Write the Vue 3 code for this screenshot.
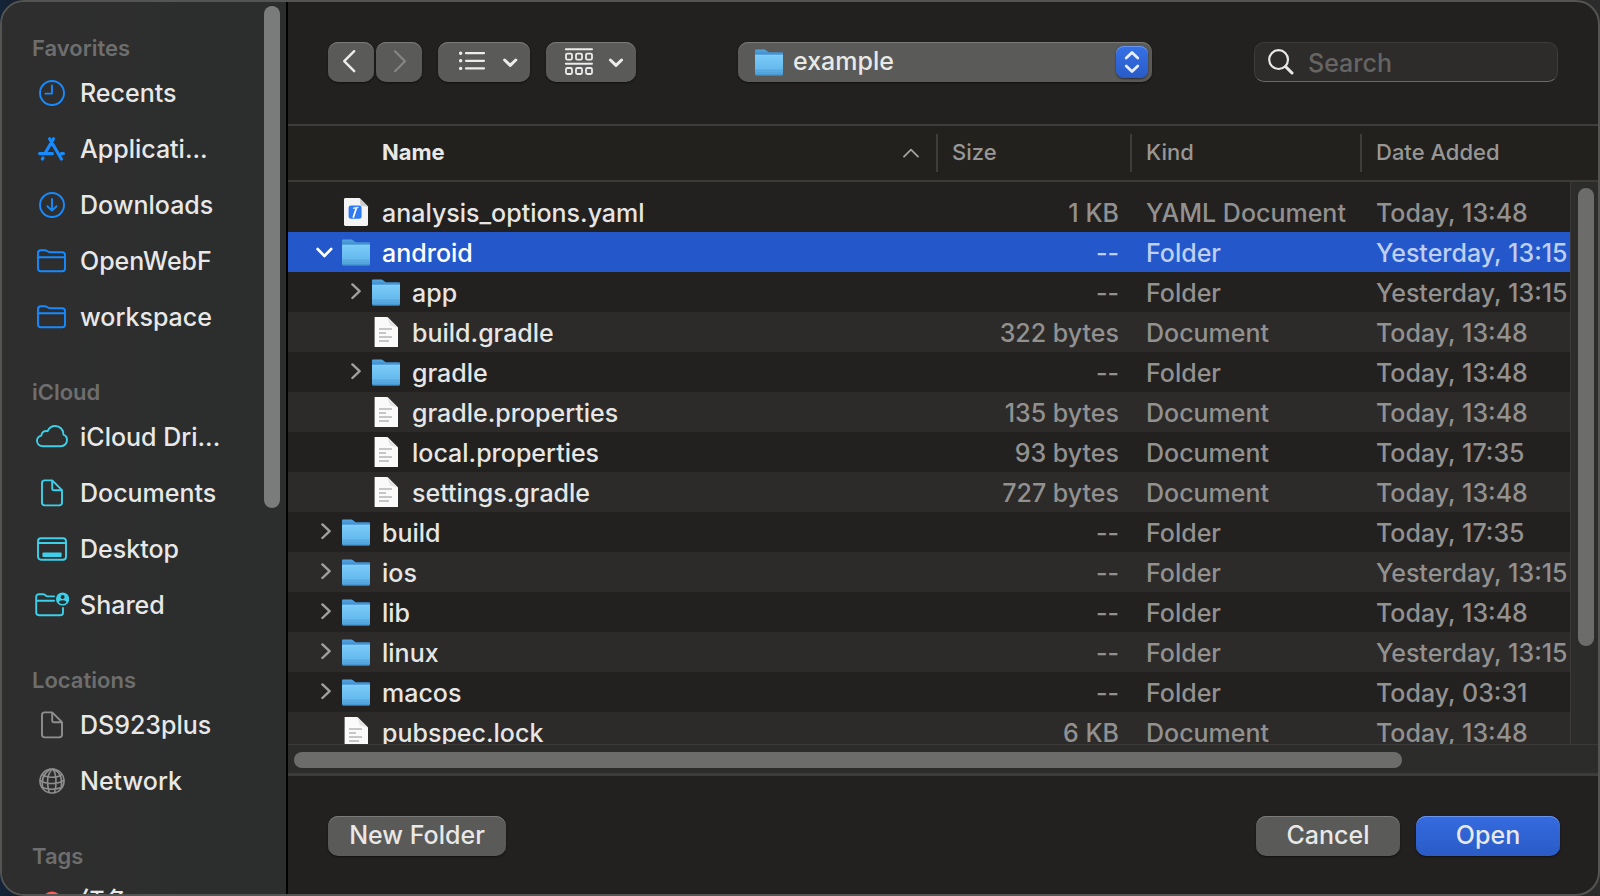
<script setup>
import { ref } from 'vue'

const sections = [
  {
    title: 'Favorites',
    tone: 'blue',
    items: [
      { label: 'Recents', icon: 'clock' },
      { label: 'Applicati...', icon: 'apps' },
      { label: 'Downloads', icon: 'download' },
      { label: 'OpenWebF', icon: 'folder' },
      { label: 'workspace', icon: 'folder' },
    ],
  },
  {
    title: 'iCloud',
    tone: 'cyan',
    items: [
      { label: 'iCloud Dri...', icon: 'cloud' },
      { label: 'Documents', icon: 'document' },
      { label: 'Desktop', icon: 'desktop' },
      { label: 'Shared', icon: 'shared' },
    ],
  },
  {
    title: 'Locations',
    tone: 'gray',
    items: [
      { label: 'DS923plus', icon: 'document' },
      { label: 'Network', icon: 'globe' },
    ],
  },
  { title: 'Tags', tone: 'red', items: [{ label: '红色', icon: 'dot' }] },
]

const files = [
  { name: 'analysis_options.yaml', type: 'yaml', level: 0, size: '1 KB', kind: 'YAML Document', date: 'Today, 13:48' },
  { name: 'android', type: 'folder', level: 0, open: true, size: '--', kind: 'Folder', date: 'Yesterday, 13:15' },
  { name: 'app', type: 'folder', level: 1, size: '--', kind: 'Folder', date: 'Yesterday, 13:15' },
  { name: 'build.gradle', type: 'text', level: 1, size: '322 bytes', kind: 'Document', date: 'Today, 13:48' },
  { name: 'gradle', type: 'folder', level: 1, size: '--', kind: 'Folder', date: 'Today, 13:48' },
  { name: 'gradle.properties', type: 'text', level: 1, size: '135 bytes', kind: 'Document', date: 'Today, 13:48' },
  { name: 'local.properties', type: 'text', level: 1, size: '93 bytes', kind: 'Document', date: 'Today, 17:35' },
  { name: 'settings.gradle', type: 'text', level: 1, size: '727 bytes', kind: 'Document', date: 'Today, 13:48' },
  { name: 'build', type: 'folder', level: 0, size: '--', kind: 'Folder', date: 'Today, 17:35' },
  { name: 'ios', type: 'folder', level: 0, size: '--', kind: 'Folder', date: 'Yesterday, 13:15' },
  { name: 'lib', type: 'folder', level: 0, size: '--', kind: 'Folder', date: 'Today, 13:48' },
  { name: 'linux', type: 'folder', level: 0, size: '--', kind: 'Folder', date: 'Yesterday, 13:15' },
  { name: 'macos', type: 'folder', level: 0, size: '--', kind: 'Folder', date: 'Today, 03:31' },
  { name: 'pubspec.lock', type: 'text', level: 0, size: '6 KB', kind: 'Document', date: 'Today, 13:48' },
]

const selected = ref('android')
const location = ref('example')
const query = ref('')
</script>

<template>
  <div class="dialog">
    <svg class="defs" width="0" height="0" aria-hidden="true">
      <defs>
        <linearGradient id="folder-back" x1="0" y1="0" x2="0" y2="1">
          <stop offset="0" stop-color="#55a7e0" />
          <stop offset="0.25" stop-color="#3a88cc" />
          <stop offset="1" stop-color="#3a88cc" />
        </linearGradient>
        <linearGradient id="folder-front" x1="0" y1="0" x2="0" y2="1">
          <stop offset="0" stop-color="#7bcbf8" />
          <stop offset="0.7" stop-color="#64b9ee" />
          <stop offset="1" stop-color="#4a9fdb" />
        </linearGradient>
        <symbol id="folder-icon" viewBox="0 0 28 27">
          <path d="M0 1.4Q0 .4 1 .4H9.2Q10.2 .4 11 1.2L12.6 2.6Q13.2 3.2 14.2 3.2H27Q28 3.2 28 4.2V25H0Z" fill="url(#folder-back)" />
          <path d="M0 6.2H28V25Q28 26.4 26.6 26.4H1.4Q0 26.4 0 25Z" fill="url(#folder-front)" />
          <path d="M0 6.2H28" stroke="#8dd6fc" stroke-width="1" />
          <path d="M0 21.2H28M0 23.4H28" stroke="#4f9fd6" stroke-width=".8" />
          <path d="M.6 26H27.4" stroke="#3a86bf" stroke-width=".8" />
        </symbol>
      </defs>
    </svg>

    <aside class="sidebar">
      <nav class="places" aria-label="Places">
        <section v-for="section in sections" :key="section.title" :class="['group', section.tone]">
          <h2>{{ section.title }}</h2>
          <a v-for="item in section.items" :key="item.label" href="#">
            <svg class="glyph" viewBox="0 0 34 34" aria-hidden="true">
              <template v-if="item.icon === 'clock'">
                <circle cx="17" cy="17" r="12" />
                <path d="M17 9.5V17.6H10.4" />
              </template>
              <template v-else-if="item.icon === 'apps'">
                <path class="thick" d="M18.6 6.8L10.8 20M14.6 6.8L26.4 27M4.6 21.6H17.4M26.4 21.6H28.4M8 26L7.4 27" />
              </template>
              <template v-else-if="item.icon === 'download'">
                <circle cx="17" cy="17" r="12" />
                <path d="M17 11V22.4M12.4 18.2L17 22.6L21.6 18.2" />
              </template>
              <template v-else-if="item.icon === 'folder'">
                <path d="M3 9Q3 6.2 5.8 6.2H9.6Q11 6.2 12 7L12.8 7.6Q13.6 8.2 15 8.2H27Q30 8.2 30 11V24.4Q30 27.2 27.2 27.2H5.8Q3 27.2 3 24.4ZM3 13.2H30" />
              </template>
              <template v-else-if="item.icon === 'cloud'">
                <path d="M8.2 26.2C4.6 26.2 2 24 2 20.8C2 18.2 3.8 16.2 6.4 15.6C6.4 12.4 9.4 10.2 12.6 11.2C14 7.8 17 6 20.2 6C25 6 28.6 9.8 28.4 14.6C30.8 15.4 32 17.6 32 20C32 23.6 29.2 26.2 25.8 26.2Z" />
              </template>
              <template v-else-if="item.icon === 'document'">
                <path d="M7 7Q7 4.4 9.6 4.4H17.2L27 14.2V26.6Q27 29.4 24.2 29.4H9.8Q7 29.4 7 26.6ZM17.2 4.6V12.4Q17.2 14.2 19 14.2H26.8" />
              </template>
              <template v-else-if="item.icon === 'desktop'">
                <rect x="3" y="6.2" width="28" height="21.6" rx="3" />
                <path d="M3 11H31" />
                <rect class="solid" x="7.4" y="20.6" width="19.2" height="4.4" rx="1" />
              </template>
              <template v-else-if="item.icon === 'shared'">
                <path d="M19 8.4H12.6Q11.4 8.4 10.6 7.4Q9.6 6.2 8.2 6.2H4.2Q1.2 6.2 1.2 9V24.6Q1.2 27.2 4 27.2H25Q28 27.2 28 24.4V20M1.2 12.8H19" />
                <circle class="solid" cx="27.6" cy="11" r="6.6" />
                <circle class="hole" cx="27.6" cy="9" r="2" />
                <path class="hole" d="M23.8 14.4Q24.2 12.2 27.6 12.2Q31 12.2 31.4 14.4Q29.8 16 27.6 16Q25.4 16 23.8 14.4Z" />
              </template>
              <template v-else-if="item.icon === 'globe'">
                <g class="fine">
                  <circle cx="17" cy="17" r="12" />
                  <path d="M17.6 5C13 9 11 16 14 28M18 5C21.4 10 22 20 19.6 28.6M19 5.2C24.6 8 27.6 14 26.4 23.4M15 5.2C9 9 6 15 7.6 23.6M7.4 10.6C12 14 22 14 26.6 10.8M5 16.4C11 20.4 22 20.6 29 16.4M7.4 23.6C13 25.6 20.4 25.6 26.4 23.4" />
                </g>
              </template>
              <template v-else>
                <circle class="solid" cx="17" cy="19" r="9.6" />
              </template>
            </svg>
            <span>{{ item.label }}</span>
          </a>
        </section>
      </nav>
      <div class="side-thumb"></div>
    </aside>

    <main class="browser">
      <header class="toolbar">
        <div class="tools">
          <div class="history">
            <button type="button" class="ctl nav" aria-label="Back">
              <svg width="46" height="40" viewBox="0 0 46 40"><path d="M26.2 9.2L16.2 19.2L26.2 29.2" stroke="#ececec" stroke-width="2.4" /></svg>
            </button>
            <button type="button" class="ctl nav" aria-label="Forward">
              <svg width="46" height="40" viewBox="0 0 46 40"><path d="M19 9.2L29 19.2L19 29.2" stroke="#858583" stroke-width="2.2" /></svg>
            </button>
          </div>
          <button type="button" class="ctl view" aria-label="List view">
            <svg width="92" height="40" viewBox="0 0 92 40">
              <path d="M28 11.2H46M28 18.8H46M28 26.4H46" stroke="#ececec" stroke-width="2.2" />
              <path d="M22.6 11.2H22.7M22.6 18.8H22.7M22.6 26.4H22.7" stroke="#ececec" stroke-width="3.4" />
              <path d="M66.6 18L72.2 23.4L77.8 18" stroke="#ececec" stroke-width="3" />
            </svg>
          </button>
          <button type="button" class="ctl grouping" aria-label="Group by">
            <svg width="90" height="40" viewBox="0 0 90 40">
              <path d="M19.8 7.2H46M19.8 21.8H46" stroke="#ececec" stroke-width="2" />
              <g stroke="#ececec" stroke-width="1.8">
                <rect x="20" y="11.6" width="6" height="6" rx="1.4" /><rect x="30" y="11.6" width="6" height="6" rx="1.4" /><rect x="40" y="11.6" width="6" height="6" rx="1.4" />
                <rect x="20" y="26" width="6" height="6" rx="1.4" /><rect x="30" y="26" width="6" height="6" rx="1.4" /><rect x="40" y="26" width="6" height="6" rx="1.4" />
              </g>
              <path d="M64.4 18L70 23.4L75.6 18" stroke="#ececec" stroke-width="3" />
            </svg>
          </button>
        </div>

        <div class="location">
          <svg class="location-folder" width="28" height="27" aria-hidden="true"><use href="#folder-icon" /></svg>
          <select v-model="location" class="ctl" aria-label="Location">
            <option>example</option>
          </select>
          <span class="stepper" aria-hidden="true">
            <svg width="32" height="32" viewBox="0 0 32 32"><path d="M10.2 12L16 6.4L21.8 12M10.2 20L16 25.6L21.8 20" stroke="#e6edff" stroke-width="2.8" /></svg>
          </span>
        </div>

        <label class="search">
          <svg width="26" height="26" viewBox="0 0 26 26" aria-hidden="true">
            <circle cx="10.6" cy="10.6" r="9.4" stroke="#e8e8e8" stroke-width="2.2" />
            <path d="M17.6 17.6L24 24" stroke="#e8e8e8" stroke-width="3" />
          </svg>
          <input v-model="query" type="text" placeholder="Search" aria-label="Search" />
        </label>
      </header>

      <div class="listing">
        <div class="viewport">
          <table>
            <colgroup>
              <col />
              <col class="c-size" />
              <col class="c-kind" />
              <col class="c-date" />
            </colgroup>
            <thead>
              <tr>
                <th scope="col" aria-sort="ascending">
                  <div class="head first">
                    Name
                    <svg width="16" height="12" viewBox="0 0 16 12" aria-hidden="true"><path d="M1 10.6L8 3.6L15 10.6" stroke="#a3a3a1" stroke-width="1.8" /></svg>
                  </div>
                </th>
                <th scope="col"><div class="head">Size</div></th>
                <th scope="col"><div class="head">Kind</div></th>
                <th scope="col"><div class="head">Date Added</div></th>
              </tr>
            </thead>
            <tbody>
              <tr class="spacer"><td colspan="4"></td></tr>
              <tr
                v-for="(file, i) in files"
                :key="file.name"
                :class="{ striped: i % 2, selected: selected === file.name }"
                @click="selected = file.name"
              >
                <td>
                  <div :class="['name', { nested: file.level }]">
                    <span class="twisty">
                      <button v-if="file.type === 'folder'" type="button" :aria-label="'Toggle ' + file.name">
                        <svg v-if="file.open" width="18" height="18" viewBox="0 0 18 18"><path d="M1.6 6L8.4 13L15.2 6" stroke="#fff" stroke-width="2.6" /></svg>
                        <svg v-else width="18" height="18" viewBox="0 0 18 18"><path d="M6.4 1.4L13.6 8.2L6.4 15" stroke="#a0a09e" stroke-width="2.4" /></svg>
                      </button>
                    </span>
                    <svg v-if="file.type === 'folder'" class="kind-icon" viewBox="0 0 28 30" aria-hidden="true"><use href="#folder-icon" width="28" height="27" y="2" /></svg>
                    <svg v-else-if="file.type === 'text'" class="kind-icon" viewBox="0 0 28 30" aria-hidden="true">
                      <path d="M2.6 0H15.4L26 10.6V30H2.6Z" fill="#fafafa" />
                      <path d="M15.4 0L17.6 7.2Q18 8.6 19.4 8.8L26 10.6Z" fill="#e3e3e3" />
                      <path d="M7 12H20M7 16H14M7 20H20M7 24H17" stroke="#b5b5b5" stroke-width="1.4" stroke-linecap="butt" />
                    </svg>
                    <svg v-else class="kind-icon" viewBox="0 0 28 30" aria-hidden="true">
                      <path d="M3.4 1H17.6L26 9.4V27.6Q26 29 24.6 29H3.4Q2 29 2 27.6V2.4Q2 1 3.4 1Z" fill="#f4f4f4" />
                      <path d="M17.6 1L18.4 7.6Q18.6 8.8 19.8 9L26 9.4Z" fill="#cdcdcd" />
                      <rect x="6.6" y="8.4" width="13" height="13.4" rx="2.4" fill="#2f7bf3" />
                      <path d="M14.4 11L11.4 20" stroke="#fff" stroke-width="1.8" />
                      <path d="M11.6 11.2L16 10.4" stroke="#dbe8ff" stroke-width="1.4" />
                    </svg>
                    <span class="label">{{ file.name }}</span>
                  </div>
                </td>
                <td class="size">{{ file.size }}</td>
                <td>{{ file.kind }}</td>
                <td>{{ file.date }}</td>
              </tr>
            </tbody>
          </table>
          <div class="vtrack"><div class="vthumb"></div></div>
        </div>
        <div class="htrack"><div class="hthumb"></div></div>
      </div>

      <footer class="actions">
        <button type="button" class="ctl new-folder">New Folder</button>
        <div class="confirm">
          <button type="button" class="ctl">Cancel</button>
          <button type="button" class="ctl primary">Open</button>
        </div>
      </footer>
    </main>
  </div>
</template>

<style>
body {
  background: linear-gradient(90deg, #14243a 0, #1c1c1d 40px, #2c2c2c 100%);
}
</style>

<style scoped>
.dialog {
  box-sizing: border-box;
  display: flex;
  height: 100vh;
  border: 2px solid #545452;
  border-radius: 24px;
  overflow: hidden;
  background: #222120;
  color: #e6e6e5;
  font-family: Inter, "Noto Sans CJK SC", sans-serif;
  font-size: 25px;
  font-weight: 500;
}
.defs { position: absolute; }
svg { display: block; fill: none; stroke-linecap: round; stroke-linejoin: round; flex: none; }

/* Sidebar */
.sidebar {
  position: relative;
  flex: none;
  width: 284px;
  border-right: 2px solid #000;
  overflow: hidden;
  background: linear-gradient(90deg, #2e2e2e 25%, #2b2e2d 85%);
}
.places { padding-top: 30px; }
.group { margin-bottom: 30px; }
.group h2 {
  margin: 0;
  padding-left: 30px;
  font-size: 22px;
  line-height: 33px;
  font-weight: 600;
  color: #6d6e6d;
}
.group a {
  display: flex;
  align-items: center;
  gap: 11px;
  height: 56px;
  padding-left: 33px;
  color: #e8e8e8;
  text-decoration: none;
  white-space: nowrap;
}
.group + .group h2 { padding-top: 1px; }
.group.red a { height: 52px; }
.glyph { width: 34px; height: 34px; stroke: currentColor; stroke-width: 1.9; }
.blue .glyph { color: #168bff; }
.cyan .glyph { color: #3dd0ea; }
.gray .glyph { color: #8f8f8f; }
.red .glyph { color: #ff5f57; }
.thick { stroke-width: 3.2; }
.fine { stroke-width: 1.6; }
.solid { fill: currentColor; stroke: none; }
.hole { fill: #2d2e2e; stroke: none; }
.side-thumb {
  position: absolute;
  top: 4px;
  right: 6px;
  width: 16px;
  height: 502px;
  border-radius: 8px;
  background: #7a7c7b;
}

/* Main column */
.browser { flex: 1; min-width: 0; display: flex; flex-direction: column; }
.toolbar {
  display: flex;
  align-items: center;
  justify-content: space-between;
  padding: 40px 40px 42px;
  border-bottom: 2px solid #3e3d3b;
}
.tools { display: flex; gap: 16px; }
.history { display: flex; gap: 2px; }
.ctl {
  height: 40px;
  margin: 0;
  padding: 0 0 2px;
  border: 0;
  border-radius: 10px;
  background: #5a5a58;
  color: #e8e8e7;
  font: inherit;
  line-height: 36px;
  box-shadow: inset 0 1px 0 #7b7b79, 0 1px 2px #111;
}
.tools .ctl { padding: 0; }
.nav { width: 46px; }
.view { width: 92px; }
.grouping { width: 90px; }

.location { position: relative; width: 414px; }
.location select { appearance: none; display: block; width: 100%; padding: 0 48px 2px 55px; }
.location-folder { position: absolute; top: 7px; left: 17px; }
.stepper {
  position: absolute;
  top: 4px;
  right: 4px;
  border-radius: 8px;
  background: linear-gradient(#3571e6, #2a5bc8);
  box-shadow: inset 0 1px 0 #6c97ee, 0 1px 2px #2a2a2a;
  pointer-events: none;
}

.search {
  box-sizing: border-box;
  display: flex;
  align-items: center;
  gap: 14px;
  width: 304px;
  height: 40px;
  padding-left: 13px;
  border: 1px solid #3d3c3b;
  border-bottom-color: #6a6a68;
  border-radius: 10px;
  background: #2d2c2b;
}
.search input {
  flex: 1;
  min-width: 0;
  padding: 2px 0 0;
  border: 0;
  outline: 0;
  background: none;
  color: inherit;
  font: inherit;
}
.search input::placeholder { color: #666564; opacity: 1; }

/* File listing */
.listing { flex: 1; min-height: 0; display: flex; flex-direction: column; }
.viewport { position: relative; flex: 1; min-height: 0; overflow: hidden; }
table { width: 100%; table-layout: fixed; border-collapse: collapse; }
.c-size { width: 194px; }
.c-kind { width: 230px; }
.c-date { width: 238px; }
th {
  height: 54px;
  padding: 0;
  background: #22211e;
  border-bottom: 2px solid #3c3b39;
  text-align: left;
  font-size: 22px;
  font-weight: 500;
  color: #989796;
}
.head {
  box-sizing: border-box;
  display: flex;
  align-items: center;
  justify-content: space-between;
  height: 38px;
  padding: 0 0 2px 14px;
  border-left: 2px solid #3e3d3b;
}
.head.first { padding: 0 17px 2px 94px; border-left: 0; font-weight: 700; color: #e8e8e7; }
td {
  height: 38px;
  padding: 2px 0 0 16px;
  line-height: 38px;
  white-space: nowrap;
  color: #929190;
}
td:first-child { padding: 0; color: #e6e6e5; }
td:last-child { overflow: hidden; }
.spacer td { height: 10px; }
td.size { padding: 2px 11px 0 0; text-align: right; }
.striped td { background: #2c2b2a; }
.selected td { background: #2458ca; color: #bfcff2; }
.selected td:first-child { color: #fff; }
.name { display: flex; align-items: center; height: 40px; padding-left: 28px; }
.name.nested { padding-left: 58px; }
.label { padding-top: 2px; }
.twisty { width: 26px; }
.twisty button { display: block; padding: 0; border: 0; background: none; }
.kind-icon { width: 28px; height: 30px; margin-right: 12px; }

.vtrack {
  position: absolute;
  top: 56px;
  right: 0;
  bottom: 0;
  width: 27px;
  border-left: 1px solid #3c3b3a;
  background: #2c2c2b;
}
.vthumb { width: 16px; height: 458px; margin: 6px 0 0 7px; border-radius: 8px; background: #6c6c6b; }
.htrack {
  padding: 7px 196px 5px 6px;
  border-top: 1px solid #3c3b3a;
  border-bottom: 3px solid #3d3c3b;
  background: #2c2c2b;
}
.hthumb { height: 16px; border-radius: 8px; background: #6c6c6b; }

/* Footer */
.actions { display: flex; justify-content: space-between; padding: 40px 38px 38px 40px; }
.new-folder { width: 178px; }
.confirm { display: flex; gap: 16px; }
.confirm .ctl { width: 144px; }
.confirm .primary {
  background: linear-gradient(#356be0, #2a5bc6);
  box-shadow: inset 0 1px 0 #6a93ea, 0 1px 2px #111;
}
</style>
